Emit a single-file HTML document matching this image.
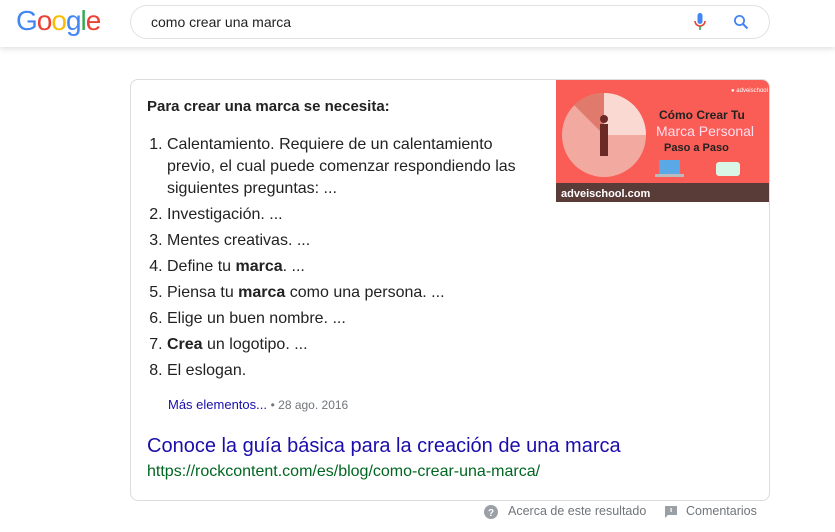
<!DOCTYPE html>
<html><head><meta charset="utf-8"><style>
body{margin:0;width:835px;height:532px;background:#fff;font-family:"Liberation Sans",Arial,sans-serif;position:relative;overflow:hidden}
.hdr{position:absolute;left:0;top:0;width:835px;height:47px;background:#fff;box-shadow:0 1px 6px rgba(32,33,36,.18)}
.logo{position:absolute;left:16px;top:5px;font-size:28px;letter-spacing:-1px;font-family:"Liberation Sans",sans-serif}
.sb{position:absolute;left:130px;top:5px;width:638px;height:32px;border:1px solid #dfe1e5;border-radius:17px}
.sb span{position:absolute;left:20px;top:8px;font-size:14px;color:#222}
.card{position:absolute;left:130px;top:79px;width:638px;height:420px;border:1px solid #dadce0;border-radius:8px;overflow:hidden}
.img{position:absolute;right:0;top:0;width:213px;height:122px;background:#f95d55}
.h{position:absolute;left:16px;top:18px;font-size:15px;font-weight:bold;color:#222}
ol{position:absolute;left:0;top:54px;margin:0;padding-left:36px;width:355px;font-size:16px;color:#222;line-height:22px}
li{margin-bottom:4px;padding-left:0}
.more{position:absolute;left:37px;top:317px;font-size:13px;color:#1a0dab}
.more i{font-style:normal;color:#70757a;font-size:12px}
.t{position:absolute;left:16px;top:355px;font-size:20px;color:#1a0dab}
.u{position:absolute;left:16px;top:383px;font-size:16px;color:#006621}
.ft{position:absolute;top:504px;font-size:12.5px;color:#70757a}
</style></head><body>
<div class="hdr">
<div class="logo"><span style="color:#4285f4">G</span><span style="color:#ea4335">o</span><span style="color:#fbbc05">o</span><span style="color:#4285f4">g</span><span style="color:#34a853">l</span><span style="color:#ea4335">e</span></div>
<div class="sb"><span>como crear una marca</span>
<svg style="position:absolute;left:563px;top:7px" width="12" height="18" viewBox="0 0 12 18"><rect x="3.5" y="0" width="5" height="11" rx="2.5" fill="#4285f4"/><path d="M1 8a5 5 0 0 0 10 0" stroke="#ea4335" stroke-width="1.6" fill="none"/><rect x="5.2" y="13" width="1.6" height="4" fill="#34a853"/></svg>
<svg style="position:absolute;left:602px;top:8px" width="16" height="16" viewBox="0 0 16 16"><circle cx="6.5" cy="6.5" r="4.6" stroke="#4285f4" stroke-width="1.8" fill="none"/><path d="M10 10l4.5 4.5" stroke="#4285f4" stroke-width="2"/></svg>
</div></div>
<div class="card">
<div class="img">
<svg width="213" height="122" viewBox="0 0 213 122">
<circle cx="48" cy="55" r="42" fill="#f2aaa0"/><path d="M48 55L48 13A42 42 0 0 1 90 55Z" fill="#fbd9d3"/><path d="M48 55L48 13A42 42 0 0 0 18 25Z" fill="#e07a6c"/>
<rect x="44" y="44" width="8" height="32" fill="#6b2a25"/><circle cx="48" cy="39" r="4" fill="#6b2a25"/>
<text x="103" y="39" font-size="12" font-weight="bold" fill="#222" font-family="Liberation Sans">Cómo Crear Tu</text>
<text x="100" y="56" font-size="14" fill="#fde" font-family="Liberation Sans">Marca Personal</text>
<text x="108" y="71" font-size="11" font-weight="bold" fill="#222" font-family="Liberation Sans">Paso a Paso</text>
<rect x="103" y="80" width="21" height="14" fill="#5aa9e6"/><rect x="99" y="94" width="29" height="3" fill="#bbb"/>
<rect x="160" y="82" width="24" height="14" rx="3" fill="#d9f5e6"/>
<text x="175" y="12" font-size="6" fill="#fff" font-family="Liberation Sans">● adveischool</text>
<rect x="0" y="103" width="213" height="19" fill="#593c38"/>
<text x="5" y="117" font-size="11" font-weight="bold" fill="#fff" font-family="Liberation Sans">adveischool.com</text>
</svg></div>
<div class="h">Para crear una marca se necesita:</div>
<ol>
<li>Calentamiento. Requiere de un calentamiento previo, el cual puede comenzar respondiendo las siguientes preguntas: ...</li>
<li>Investigación. ...</li>
<li>Mentes creativas. ...</li>
<li>Define tu <b>marca</b>. ...</li>
<li>Piensa tu <b>marca</b> como una persona. ...</li>
<li>Elige un buen nombre. ...</li>
<li><b>Crea</b> un logotipo. ...</li>
<li>El eslogan.</li>
</ol>
<div class="more">Más elementos... <i>• 28 ago. 2016</i></div>
<div class="t">Conoce la guía básica para la creación de una marca</div>
<div class="u">https://rockcontent.com/es/blog/como-crear-una-marca/</div>
</div>
<svg style="position:absolute;left:484px;top:505px" width="14" height="14"><circle cx="7" cy="7" r="7" fill="#9aa0a6"/><text x="4" y="11" font-size="10" font-weight="bold" fill="#fff" font-family="Liberation Sans">?</text></svg>
<div class="ft" style="left:508px">Acerca de este resultado</div>
<svg style="position:absolute;left:665px;top:506px" width="12" height="12"><path d="M0 0h12v9H3L0 12Z" fill="#9aa0a6"/><rect x="5.5" y="2" width="1.2" height="4" fill="#fff"/></svg>
<div class="ft" style="left:686px">Comentarios</div>
</body></html>
